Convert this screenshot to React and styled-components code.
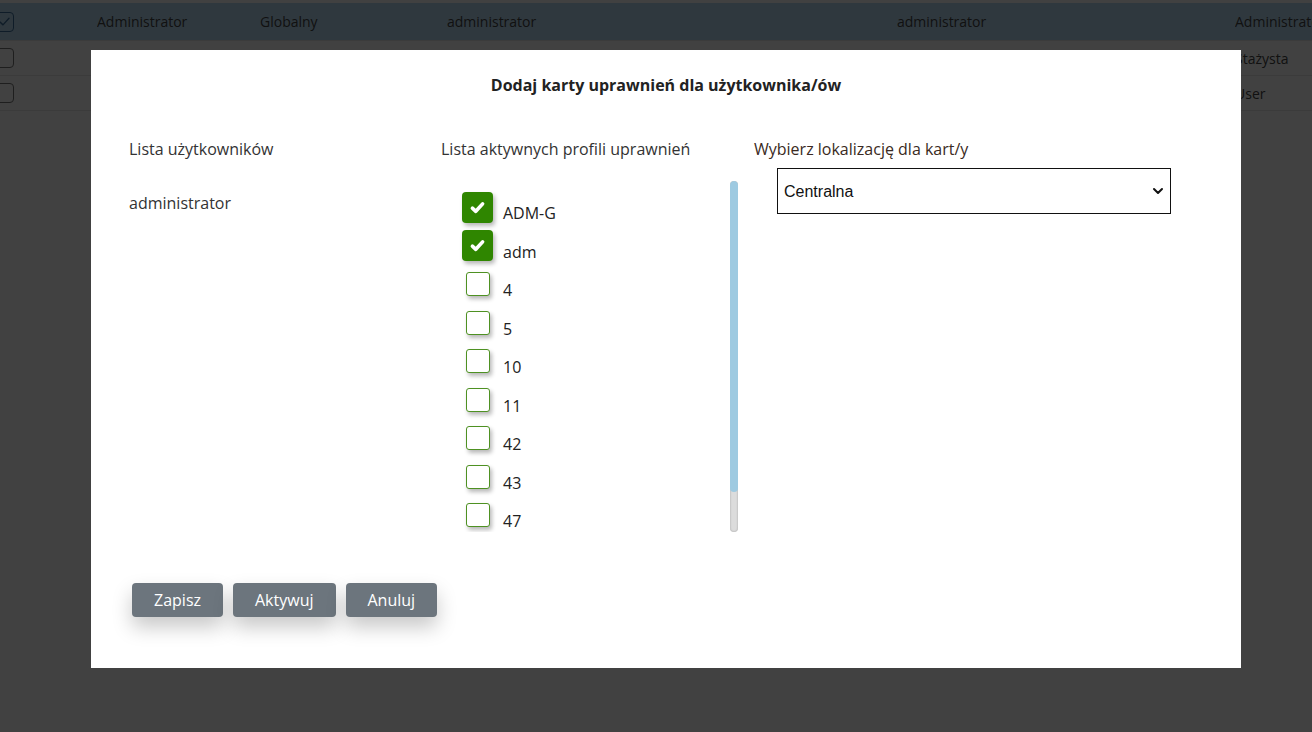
import React from 'react';
import styled, { createGlobalStyle } from 'styled-components';

const GlobalStyle = createGlobalStyle`
  html, body {
    margin: 0;
    padding: 0;
    background: #fff;
    font-family: "Open Sans", "Noto Sans", sans-serif;
    overflow: hidden;
  }
`;

const Page = styled.div`
  width: 1312px;
  height: 732px;
  padding-top: 3px;
  box-sizing: border-box;
  background: #fff;
  overflow: hidden;
`;

const Table = styled.div`
  margin-left: -6px;
`;

const Row = styled.div`
  display: grid;
  grid-template-columns: 103px 163px 187px 450px 338px 200px;
  align-items: center;
  height: ${p => (p.head ? 37 : 34)}px;
  background: ${p => (p.selected ? '#b9ddf4' : '#fff')};
  border-bottom: 1px solid #e6e6e6;
  font-size: 14px;
  color: #444;
  white-space: nowrap;
`;

const Cell = styled.div`
  overflow: hidden;
`;

const RowBox = styled.div`
  width: 18px;
  height: 18px;
  border: 1px solid ${p => (p.checked ? '#3d6f9c' : '#777')};
  border-radius: 4px;
  display: flex;
  align-items: center;
  justify-content: center;
`;

const Overlay = styled.div`
  position: fixed;
  inset: 0;
  background: rgba(0, 0, 0, 0.745);
`;

const Modal = styled.div`
  width: 1150px;
  height: 618px;
  margin: 50px 0 0 91px;
  background: #fff;
  box-sizing: border-box;
  padding: 24px 38px 0;
  color: #222;
`;

const Title = styled.h2`
  margin: 0;
  text-align: center;
  font-size: 16px;
  font-weight: 700;
  line-height: 22px;
`;

const Columns = styled.div`
  display: grid;
  grid-template-columns: 312px 313px 330px;
  margin-top: 42px;
`;

const Column = styled.div`
  display: flex;
  flex-direction: column;
`;

const Label = styled.div`
  font-size: 16px;
  line-height: 22px;
  color: ${p => p.color || '#333'};
`;

const UserName = styled.div`
  font-size: 16px;
  line-height: 22px;
  margin-top: 32px;
  color: #333;
`;

const ProfileBox = styled.div`
  display: flex;
  margin-top: 21px;
  width: 297px;
  height: 351px;
`;

const ProfileList = styled.div`
  flex: 1;
  overflow: hidden;
  padding: 7px 0 0 21px;
`;

const ScrollTrack = styled.div`
  width: 8px;
  height: 100%;
  border-radius: 4px;
  background: #dcdcdc;
  box-shadow: inset 0 0 2px rgba(0, 0, 0, 0.3);
  overflow: hidden;
`;

const ScrollThumb = styled.div`
  width: 100%;
  background: #9ecae1;
  border-radius: 4px;
`;

const ProfileRow = styled.label`
  display: flex;
  align-items: center;
  height: 38.5px;
`;

const BoxSlot = styled.span`
  width: 31px;
  display: flex;
  justify-content: center;
  flex-shrink: 0;
`;

const CheckBox = styled.span`
  width: ${p => (p.checked ? 31 : 24)}px;
  height: ${p => (p.checked ? 31 : 24)}px;
  box-sizing: border-box;
  border-radius: ${p => (p.checked ? 4 : 3)}px;
  border: ${p => (p.checked ? 'none' : '1.5px solid #4e9122')};
  background: ${p => (p.checked ? '#2f8600' : '#fff')};
  box-shadow: 2px 3px 4px rgba(0, 0, 0, 0.28);
  display: flex;
  align-items: center;
  justify-content: center;
`;

const ProfileName = styled.span`
  margin-left: 10px;
  padding-top: 12px;
  font-size: 16px;
  color: #222;
`;

const SelectWrap = styled.div`
  position: relative;
  margin: 8px 0 0 23px;
  width: 394px;
`;

const Select = styled.select`
  appearance: none;
  width: 100%;
  height: 46px;
  border: 1px solid #111;
  border-radius: 0;
  background: #fff;
  padding: 0 30px 0 6px;
  font-family: "Liberation Sans", Arial, sans-serif;
  font-size: 16px;
  color: #111;
  outline: none;
`;

const Chevron = styled.svg`
  position: absolute;
  right: 7px;
  top: 17px;
  pointer-events: none;
`;

const Buttons = styled.div`
  display: flex;
  gap: 10px;
  margin: 51px 0 0 3px;
`;

const Button = styled.button`
  height: 34px;
  padding: 0 22px;
  border: none;
  border-radius: 4px;
  background: #6c757d;
  color: #fff;
  font-family: inherit;
  font-size: 16px;
  box-shadow: 0 10px 20px rgba(0, 0, 0, 0.22);
  cursor: pointer;
`;

const Check = ({ size = 17, color = '#fff', width = 3.4 }) => (
  <svg width={size} height={size} viewBox="0 0 16 16">
    <path d="M3.2 8.6 L6.4 11.6 L12.8 4.6" fill="none" stroke={color} strokeWidth={width} strokeLinecap="round" strokeLinejoin="round" />
  </svg>
);

const rows = [
  { selected: true, checked: true, cells: ['Administrator', 'Globalny', 'administrator', 'administrator', 'Administrator'] },
  { cells: ['', '', '', '', 'Stażysta'] },
  { cells: ['', '', '', '', 'User'] },
];

const profiles = [
  { name: 'ADM-G', checked: true },
  { name: 'adm', checked: true },
  { name: '4' },
  { name: '5' },
  { name: '10' },
  { name: '11' },
  { name: '42' },
  { name: '43' },
  { name: '47' },
];

// share of the list that is visible, drawn as the thumb of the scroll bar
const thumbShare = 0.886;

export default function App() {
  return (
    <Page>
      <GlobalStyle />
      <Table>
        {rows.map((r, i) => (
          <Row key={i} head={i === 0} selected={r.selected}>
            <Cell>
              <RowBox checked={r.checked}>{r.checked && <Check size={15} color="#3d6f9c" width={1.5} />}</RowBox>
            </Cell>
            {r.cells.map((c, j) => (
              <Cell key={j}>{c}</Cell>
            ))}
          </Row>
        ))}
      </Table>
      <Overlay>
        <Modal>
          <Title>Dodaj karty uprawnień dla użytkownika/ów</Title>
          <Columns>
            <Column>
              <Label>Lista użytkowników</Label>
              <UserName>administrator</UserName>
            </Column>
            <Column>
              <Label>Lista aktywnych profili uprawnień</Label>
              <ProfileBox>
                <ProfileList>
                  {profiles.map(p => (
                    <ProfileRow key={p.name}>
                      <BoxSlot>
                        <CheckBox checked={p.checked}>{p.checked && <Check />}</CheckBox>
                      </BoxSlot>
                      <ProfileName>{p.name}</ProfileName>
                    </ProfileRow>
                  ))}
                </ProfileList>
                <ScrollTrack>
                  <ScrollThumb style={{ height: `${thumbShare * 100}%` }} />
                </ScrollTrack>
              </ProfileBox>
            </Column>
            <Column>
              <Label color="#3a2a22">Wybierz lokalizację dla kart/y</Label>
              <SelectWrap>
                <Select defaultValue="Centralna">
                  <option>Centralna</option>
                </Select>
                <Chevron width="12" height="12" viewBox="0 0 12 12">
                  <path d="M2 4 L6 8 L10 4" fill="none" stroke="#111" strokeWidth="2" strokeLinecap="round" strokeLinejoin="round" />
                </Chevron>
              </SelectWrap>
            </Column>
          </Columns>
          <Buttons>
            <Button>Zapisz</Button>
            <Button>Aktywuj</Button>
            <Button>Anuluj</Button>
          </Buttons>
        </Modal>
      </Overlay>
    </Page>
  );
}
